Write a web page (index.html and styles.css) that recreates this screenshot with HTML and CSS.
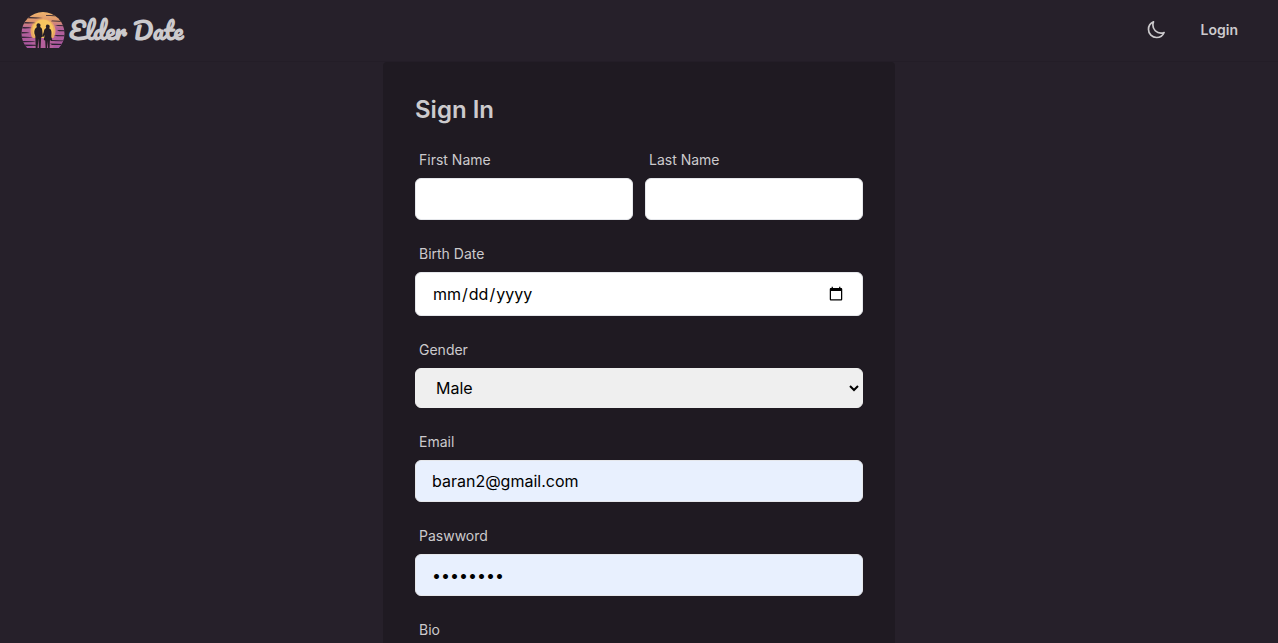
FILE: index.html
```html
<!DOCTYPE html>
<html lang="en">
<head>
  <meta charset="utf-8">
  <meta name="viewport" content="width=device-width, initial-scale=1">
  <title>Elder Date</title>
  <link rel="stylesheet" href="styles.css">
</head>
<body>
  <header class="navbar">
    <a class="brand" href="#">
      <svg class="brand-logo" viewBox="0 0 44 36" aria-hidden="true">
        <defs>
          <clipPath id="sun"><circle cx="22" cy="21.5" r="21.5"/></clipPath>
          <linearGradient id="sky" x1="0" y1="0" x2="0" y2="1">
            <stop offset="0" stop-color="#f0b66c"/>
            <stop offset=".25" stop-color="#dd946f"/>
            <stop offset=".45" stop-color="#b4629a"/>
            <stop offset="1" stop-color="#a955a0"/>
          </linearGradient>
        </defs>
        <g clip-path="url(#sun)">
          <rect width="44" height="36" fill="url(#sky)"/>
          <circle cx="22" cy="19" r="12.5" fill="#e9a765"/>
          <circle cx="22" cy="18" r="10.5" fill="#f7c55f"/>
          <path fill="#b4609b" d="M9 26h26l-3 10H12z"/>
          <path fill="#2a2130" d="M8 5l9 .5 5 .6-7 .4-9-.3zM25 3l12 .5-3 .7-9-.4zM2 10l10 .4 3 .6-8 .5-7-.3zM31 8.600l12 .4-4 .8-9-.5zM0 15l8 .3 3 .7-7 .4-4-.2zM34 13l10 .3v1l-7-.2zM0 20l6 .3 3 .7-9 .5zM36 18l8 .3v1l-6-.1zM0 24.600l9 .3 3 .6-12 .6zM33 23l11 .3v1l-8-.1zM2 29l10 .2 3 .7-13 .3zM30 28l13 .4-2 .9-11-.4zM0 32.600l14 .2 2 1-16 .5zM29 31.600l15 .3v1.200l-13-.2z"/>
          <path fill="#251d25" d="M17.500 11.200c1.300 0 2.100 1 2 2.200 0 .7-.2 1.200-.5 1.600 1.500.6 2.100 1.700 2.200 3.200l.5 5.300-.8 2-.7-.6-.6 11h-1.700l-.5-9.500-.8 9.500h-1.900l-.4-12-.9-2.500c-.3-2.500.2-5 2.600-6.300-.5-.5-.6-1.100-.5-1.800.1-1.200.8-2.100 2-2.100z"/>
          <path fill="#251d25" d="M26.500 12.500c1.400 0 2.200.9 2.200 2.200 0 .6-.2 1.100-.6 1.500 2 .9 2.500 2.800 2.400 5l-.2 3.500 1 3.300-2.400.5-.3 7.500h-1.500l-.4-7-.6 7h-1.500l-.4-7.500-1.400-.5.8-5-1.300 2-1.200-.4 1.700-4.600c.3-2 .7-3.300 2.400-4-.8-1.500-.3-3.500 1.300-3.500z"/>
        </g>
      </svg>
      <span class="brand-name">Elder Date</span>
    </a>
    <nav class="nav-actions">
      <button class="theme-toggle" type="button" aria-label="Toggle theme">
        <svg class="icon" viewBox="0 0 24 24" fill="none" stroke="currentColor" stroke-width="2" stroke-linecap="round" stroke-linejoin="round" aria-hidden="true">
          <path d="M21.750 15A9.700 9.700 0 0 1 18 15.750C12.600 15.750 8.250 11.400 8.250 6c0-1.330.27-2.600.75-3.750A9.750 9.750 0 0 0 3 11.250C3 16.640 7.360 21 12.750 21a9.750 9.750 0 0 0 9-6z"/>
        </svg>
      </button>
      <a class="nav-link" href="#">Login</a>
    </nav>
  </header>

  <main class="card">
    <h1 class="title">Sign In</h1>
    <form class="form">
      <div class="row">
        <div class="field">
          <label class="label" for="first-name">First Name</label>
          <input class="control" id="first-name" type="text">
        </div>
        <div class="field">
          <label class="label" for="last-name">Last Name</label>
          <input class="control" id="last-name" type="text">
        </div>
      </div>
      <div class="field">
        <label class="label" for="birth-date">Birth Date</label>
        <input class="control control-date" id="birth-date" type="date">
      </div>
      <div class="field">
        <label class="label" for="gender">Gender</label>
        <select class="control control-select" id="gender">
          <option>Male</option>
        </select>
      </div>
      <div class="field">
        <label class="label" for="email">Email</label>
        <input class="control control-filled" id="email" type="email" value="baran2@gmail.com">
      </div>
      <div class="field">
        <label class="label" for="password">Paswword</label>
        <input class="control control-filled" id="password" type="password" value="baran123">
      </div>
      <div class="field">
        <label class="label" for="bio">Bio</label>
        <textarea class="control" id="bio" rows="3"></textarea>
      </div>
    </form>
  </main>
</body>
</html>
```

FILE: styles.css
```css
*,
*::before,
*::after {
  box-sizing: border-box;
}

html {
  scrollbar-width: none;
}

body {
  margin: 0;
  background: #26202a;
  color: #cccacd;
  font-family: Inter, "Liberation Sans", sans-serif;
  font-size: 16px;
  line-height: 24px;
}

.navbar {
  display: flex;
  align-items: center;
  justify-content: space-between;
  height: 62px;
  padding: 0 40px 2px 21px;
  border-bottom: 1px solid #231d27;
}

.brand {
  display: flex;
  align-items: center;
  gap: 4px;
  color: inherit;
  text-decoration: none;
}

.brand-logo {
  width: 44px;
  height: 36px;
}

.brand-name {
  font-family: Pacifico, cursive;
  font-size: 24px;
  font-weight: 700;
  line-height: 32px;
}

.nav-actions {
  display: flex;
  align-items: center;
  gap: 35px;
}

.theme-toggle {
  display: flex;
  padding: 0;
  border: 0;
  background: none;
  color: inherit;
  cursor: pointer;
}

.icon {
  width: 20px;
  height: 20px;
}

.nav-link {
  color: inherit;
  font-size: 14px;
  font-weight: 600;
  line-height: 20px;
  text-decoration: none;
}

.card {
  max-width: 512px;
  margin: 0 auto;
  padding: 32px;
  border-radius: 4px;
  background: #1f1a22;
}

.title {
  margin: 0 0 24px;
  font-size: 24px;
  font-weight: 600;
  line-height: 32px;
}

.form {
  display: flex;
  flex-direction: column;
  gap: 24px;
}

.row {
  display: grid;
  grid-template-columns: 1fr 1fr;
  gap: 12px;
}

.field {
  display: flex;
  flex-direction: column;
  gap: 8px;
  min-width: 0;
}

.label {
  padding-left: 4px;
  font-size: 14px;
  line-height: 20px;
}

.control {
  width: 100%;
  margin: 0;
  padding: 8px 16px;
  border: 1px solid #e5e7eb;
  border-radius: 6px;
  background: #fff;
  color: #000;
  font: inherit;
}

.control-date {
  height: 44px;
}

.control-select {
  height: 40px;
  padding: 0 16px;
  border-color: #efefef;
  background: #efefef;
}

.control-filled {
  background: #e8f0fe;
}
```
